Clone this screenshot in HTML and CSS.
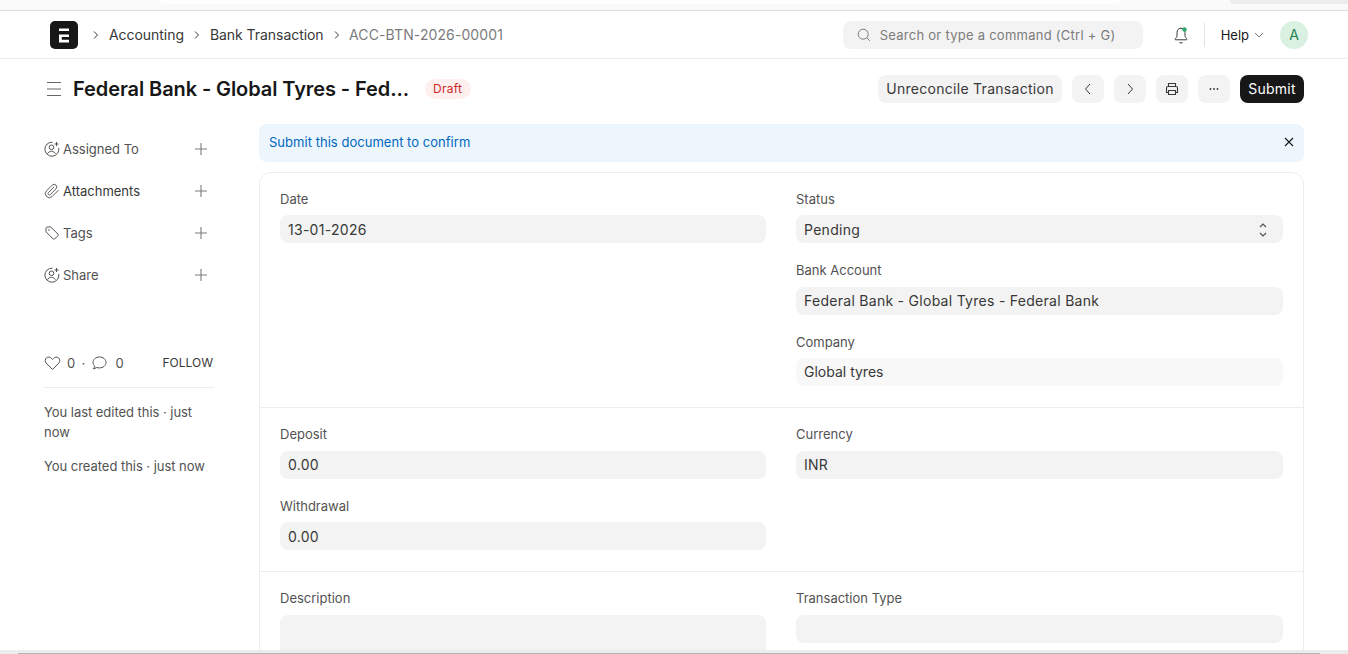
FILE: index.html
```html
<!DOCTYPE html>
<html lang="en">
<head>
<meta charset="utf-8">
<title>ACC-BTN-2026-00001</title>
<link rel="stylesheet" href="styles.css">
</head>
<body>
<div class="app">
  <div class="chrome-top"><span class="tab-white"></span><span class="tab-gray"></span></div>
  <header class="navbar">
    <svg class="logo" width="28" height="28" viewBox="0 0 28 28"><rect width="28" height="28" rx="5" fill="#171717"/><path d="M9 7.500h10v2.600H9zM9 13.500h10v2.600h-7.200v2.600H19v2.800H9z" fill="#fff"/></svg>
    <nav class="crumbs">
      <svg class="crumb-sep" width="8" height="10" viewBox="0 0 8 10"><path d="M2 1.500 5.500 5 2 8.500" fill="none" stroke="#383838" stroke-width="1"/></svg>
      <a class="crumb">Accounting</a>
      <svg class="crumb-sep" width="8" height="10" viewBox="0 0 8 10"><path d="M2 1.500 5.500 5 2 8.500" fill="none" stroke="#383838" stroke-width="1"/></svg>
      <a class="crumb">Bank Transaction</a>
      <svg class="crumb-sep" width="8" height="10" viewBox="0 0 8 10"><path d="M2 1.500 5.500 5 2 8.500" fill="none" stroke="#383838" stroke-width="1"/></svg>
      <a class="crumb crumb-current">ACC-BTN-2026-00001</a>
    </nav>
    <div class="search">
      <svg width="14" height="14" viewBox="0 0 14 14"><circle cx="6.200" cy="6.200" r="5" fill="none" stroke="#7c7c7c" stroke-width="1"/><path d="m9.800 9.800 3 3" stroke="#7c7c7c" stroke-width="1"/></svg>
      <span>Search or type a command (Ctrl + G)</span>
    </div>
    <svg class="bell" width="16" height="18" viewBox="0 0 16 18"><path d="M8 2.200c-2.600 0-4 2-4 4.400v3.200c0 1.200-.9 2-1.800 3-.3.5 0 1 .5 1h10.600c.5 0 .8-.5.5-1-.9-1-1.800-1.800-1.800-3V6.600C12 4.200 10.600 2.200 8 2.200ZM6.300 16c.4.700 1 1 1.700 1s1.300-.3 1.700-1" fill="none" stroke="#383838" stroke-width="1"/><circle cx="11.500" cy="3.500" r="2.200" fill="#30a66d"/></svg>
    <span class="nav-div"></span>
    <span class="help">Help</span>
    <svg class="help-chev" width="10" height="6" viewBox="0 0 10 6"><path d="m1 1 4 4 4-4" fill="none" stroke="#7c7c7c" stroke-width="1"/></svg>
    <span class="avatar">A</span>
  </header>

  <div class="page-head">
    <svg class="menu" width="16" height="14" viewBox="0 0 16 14"><path d="M0 .5h14M0 7h14M0 13.500h14" stroke="#666" stroke-width="1"/></svg>
    <h1 class="title">Federal Bank - Global Tyres - Fed...</h1>
    <span class="pill">Draft</span>
    <div class="actions">
      <button class="btn btn-text">Unreconcile Transaction</button>
      <button class="btn btn-icon"><svg width="16" height="16" viewBox="0 0 16 16"><path d="M10 3 5.500 8l4.500 5" fill="none" stroke="#383838" stroke-width="1"/></svg></button>
      <button class="btn btn-icon"><svg width="16" height="16" viewBox="0 0 16 16"><path d="m6 3 4.500 5L6 13" fill="none" stroke="#383838" stroke-width="1"/></svg></button>
      <button class="btn btn-icon"><svg width="16" height="16" viewBox="0 0 16 16"><path d="M4.500 5.500V2.500h7v3M4.500 11.500H2.500V7a1.500 1.500 0 0 1 1.500-1.500h8A1.500 1.500 0 0 1 13.500 7v4.500h-2M4.500 9.500h7v4h-7z" fill="none" stroke="#383838" stroke-width="1.100"/></svg></button>
      <button class="btn btn-icon"><svg width="16" height="16" viewBox="0 0 16 16"><circle cx="4.500" cy="8" r=".9" fill="#383838"/><circle cx="8" cy="8" r=".9" fill="#383838"/><circle cx="11.500" cy="8" r=".9" fill="#383838"/></svg></button>
      <button class="btn btn-primary">Submit</button>
    </div>
  </div>

  <div class="body">
    <aside class="sidebar">
      <div class="side-item">
        <svg width="16" height="16" viewBox="0 0 16 16"><g fill="none" stroke="#525252"><path d="M8.500 1.200A7 7 0 1 0 14.800 7"/><circle cx="7.500" cy="6.300" r="2.300"/><path d="M3.500 12.700c.8-1.500 2.300-2.400 4-2.400s3.200.9 4 2.400M12.500 1v4M10.500 3h4"/></g></svg>
        <span class="side-label">Assigned To</span>
        <svg class="plus" width="14" height="14" viewBox="0 0 14 14"><path d="M7 1v12M1 7h12" stroke="#7c7c7c" stroke-width="1.100"/></svg>
      </div>
      <div class="side-item">
        <svg width="16" height="16" viewBox="0 0 24 24"><path d="m21.440 11.050-9.190 9.190a6 6 0 0 1-8.490-8.490l8.570-8.570A4 4 0 1 1 18 8.840l-8.590 8.570a2 2 0 0 1-2.830-2.830l8.490-8.480" fill="none" stroke="#525252" stroke-width="1.400" stroke-linecap="round" stroke-linejoin="round"/></svg>
        <span class="side-label side-dark">Attachments</span>
        <svg class="plus" width="14" height="14" viewBox="0 0 14 14"><path d="M7 1v12M1 7h12" stroke="#7c7c7c" stroke-width="1.100"/></svg>
      </div>
      <div class="side-item">
        <svg width="16" height="16" viewBox="0 0 16 16"><path d="M2 3.200C2 2.500 2.500 2 3.200 2h3.600L14 9.200c.4.400.4 1 0 1.400l-3.400 3.400c-.4.400-1 .4-1.400 0L2 6.800Z" fill="none" stroke="#525252"/><circle cx="5" cy="5" r=".8" fill="#525252"/></svg>
        <span class="side-label">Tags</span>
        <svg class="plus" width="14" height="14" viewBox="0 0 14 14"><path d="M7 1v12M1 7h12" stroke="#7c7c7c" stroke-width="1.100"/></svg>
      </div>
      <div class="side-item">
        <svg width="16" height="16" viewBox="0 0 16 16"><g fill="none" stroke="#525252"><path d="M8.500 1.200A7 7 0 1 0 14.800 7"/><circle cx="7.500" cy="6.300" r="2.300"/><path d="M3.500 12.700c.8-1.500 2.300-2.400 4-2.400s3.200.9 4 2.400M12.500 1v4M10.500 3h4"/></g></svg>
        <span class="side-label">Share</span>
        <svg class="plus" width="14" height="14" viewBox="0 0 14 14"><path d="M7 1v12M1 7h12" stroke="#7c7c7c" stroke-width="1.100"/></svg>
      </div>
      <div class="stats">
        <svg width="17" height="16" viewBox="0 0 17 16"><path d="M8.500 14.500 2.300 8.200C.8 6.600.9 4.200 2.400 2.900c1.600-1.300 3.900-1 5.200.6l.9 1 .9-1c1.300-1.600 3.600-1.900 5.200-.6 1.500 1.300 1.600 3.700.1 5.300Z" fill="none" stroke="#525252" stroke-linejoin="round"/></svg>
        <span class="stat-num">0</span>
        <span class="stat-dot">·</span>
        <svg width="16" height="16" viewBox="0 0 16 16"><path d="M8.500 2c-3.600 0-6.500 2.400-6.500 5.400 0 1.500.7 2.800 1.800 3.800L2.500 14l3.300-1.500c.8.300 1.700.4 2.700.4 3.600 0 6.500-2.400 6.500-5.500S12.100 2 8.500 2Z" fill="none" stroke="#525252" stroke-linejoin="round"/></svg>
        <span class="stat-num stat-num-last">0</span>
        <span class="follow">FOLLOW</span>
      </div>
      <p class="meta meta-first">You last edited this · just now</p>
      <p class="meta">You created this · just now</p>
    </aside>

    <main class="main">
      <div class="alert">
        <span>Submit this document to confirm</span>
        <svg width="12" height="12" viewBox="0 0 12 12"><path d="m2 2 8 8M10 2l-8 8" stroke="#171717" stroke-width="1.100"/></svg>
      </div>
      <div class="card">
        <section class="section s1">
          <div class="col">
            <div class="field"><label class="label label-low">Date</label><div class="input input-low">13-01-2026</div></div>
          </div>
          <div class="col">
            <div class="field"><label class="label label-low">Status</label><div class="input input-select">Pending
              <svg width="10" height="14" viewBox="0 0 10 14"><path d="m2 4 3-3 3 3M2 10l3 3 3-3" fill="none" stroke="#525252" stroke-width="1.200"/></svg></div></div>
            <div class="field"><label class="label">Bank Account</label><div class="input">Federal Bank - Global Tyres - Federal Bank</div></div>
            <div class="field"><label class="label label-low">Company</label><div class="input input-light">Global tyres</div></div>
          </div>
        </section>
        <section class="section s2">
          <div class="col">
            <div class="field"><label class="label">Deposit</label><div class="input">0.00</div></div>
            <div class="field"><label class="label label-low">Withdrawal</label><div class="input input-low">0.00</div></div>
          </div>
          <div class="col">
            <div class="field"><label class="label">Currency</label><div class="input">INR</div></div>
          </div>
        </section>
        <section class="section s3">
          <div class="col">
            <div class="field"><label class="label">Description</label><div class="input input-tall"></div></div>
          </div>
          <div class="col">
            <div class="field"><label class="label">Transaction Type</label><div class="input"></div></div>
          </div>
        </section>
      </div>
    </main>
  </div>
  <div class="scrollbar"><span class="thumb"></span></div>
</div>
</body>
</html>
```
FILE: styles.css
```css
* { box-sizing: border-box; }
html, body { margin: 0; height: 100%; overflow: hidden; }
body { font-family: Inter, "Liberation Sans", sans-serif; background: #fff; color: #171717; }
.app { height: 100vh; display: flex; flex-direction: column; overflow: hidden; }

.chrome-top { flex: none; height: 11px; background: #fafafa; border-bottom: 1px solid #dcdcdc; display: flex; align-items: flex-start; }
.tab-white { width: 960px; height: 4px; margin-left: 160px; background: #fff; border-radius: 0 0 6px 6px; }
.tab-gray { flex: 1; height: 4px; margin-left: 110px; background: #ececec; border-radius: 0 0 0 6px; }

.navbar { flex: none; height: 48px; border-bottom: 1px solid #ededed; padding: 0 40px 0 50px; display: flex; align-items: center; }
.logo { flex: none; }
.crumbs { display: flex; align-items: center; margin-left: 14px; font-size: 14px; letter-spacing: -.05px; }
.crumb { color: #383838; }
.crumb-sep { margin-right: 9px; }
.crumb + .crumb-sep { margin-left: 9px; }
.crumb-current { color: #7c7c7c; letter-spacing: .1px; margin-left: -.5px; }
.search { width: 300px; height: 28px; margin-left: auto; border-radius: 8px; background: #f3f3f3; display: flex; align-items: center; gap: 9px; padding-left: 14px; font-size: 13px; letter-spacing: .02em; color: #7c7c7c; }
.bell { margin-left: 30px; }
.nav-div { width: 1px; height: 24px; background: #e2e2e2; margin-left: 15px; }
.help { margin-left: 16px; font-size: 13px; color: #171717; }
.help-chev { margin-left: 5px; }
.avatar { width: 28px; height: 28px; margin-left: 16px; border-radius: 50%; background: #daf0e1; color: #228055; display: flex; align-items: center; justify-content: center; font-size: 14px; }

.page-head { flex: none; height: 65px; padding: 16px 44px 0 47px; display: flex; align-items: flex-start; }
.menu { margin-top: 7px; flex: none; }
.title { margin: 0 0 0 10px; font-size: 20px; line-height: 28px; font-weight: 600; letter-spacing: -.09px; color: #171717; }
.pill { margin: 4px 0 0 16px; height: 20px; padding: 0 8.5px 0 8px; border-radius: 10px; background: #fff0f0; color: #cc2929; font-size: 12px; line-height: 20px; letter-spacing: .02em; }
.actions { margin-left: auto; display: flex; gap: 10px; }
.btn { height: 28px; border: 0; border-radius: 8px; padding: 0; background: #f3f3f3; color: #383838; font-family: inherit; font-size: 14px; letter-spacing: .02em; display: flex; align-items: center; justify-content: center; }
.btn-text { width: 184px; padding-bottom: 2px; }
.btn-icon { width: 32px; }
.btn-primary { width: 64px; background: #171717; color: #fff; padding-bottom: 2px; }

.body { flex: 1; min-height: 0; display: flex; padding: 0 44px; gap: 45px; overflow: hidden; }
.sidebar { flex: none; width: 170px; padding-top: 4px; font-size: 13px; color: #525252; }
.side-item { height: 42px; display: flex; align-items: center; }
.side-label { margin-left: 3px; }
.side-dark { color: #383838; }
.plus { margin-left: auto; margin-right: 6px; }
.stats { margin-top: 59px; height: 33px; border-bottom: 1px solid #ededed; display: flex; align-items: flex-start; letter-spacing: .02em; }
.stat-num { margin-left: 6px; }
.stat-num-last { margin-left: 8px; }
.stat-dot { margin: 0 6px; }
.follow { margin-left: auto; margin-right: 1px; font-size: 12px; color: #383838; letter-spacing: 0; }
.meta { margin: 0; line-height: 20px; letter-spacing: -.04px; }
.meta-first { margin: 14px 0 14px; }

.main { flex: 1; min-width: 0; }
.alert { height: 38px; border-radius: 8px; background: #edf6fd; color: #0068bd; font-size: 13px; letter-spacing: .03px; display: flex; align-items: center; justify-content: space-between; padding: 0 9px 2px 10px; }
.card { margin-top: 10px; border: 1px solid #ededed; border-radius: 12px; }
.section { display: grid; grid-template-columns: 486px 1fr; gap: 30px; padding: 0 20px; }
.section + .section { border-top: 1px solid #ededed; }
.s1 { padding-top: 18.4px; padding-bottom: 20.6px; }
.s2 { padding-top: 19.4px; padding-bottom: 20.6px; }
.s3 { padding-top: 19px; padding-bottom: 20px; }
.col { display: flex; flex-direction: column; gap: 19.5px; min-width: 0; }
.s2 .col { gap: 19px; }
.label { display: block; height: 16px; margin-bottom: 8px; font-size: 13px; line-height: 15px; color: #525252; }
.label-low { line-height: 17px; }
.input { height: 28px; border-radius: 8px; background: #f3f3f3; padding: 0 8px; font-size: 14px; line-height: 28px; color: #383838; letter-spacing: .02em; }
.input-low { line-height: 30px; }
.input-select { display: flex; align-items: center; justify-content: space-between; padding: 2px 15px 0 8px; }
.input-light { background: #f8f8f8; letter-spacing: 0; }
.input-tall { height: 80px; }

.scrollbar { flex: none; height: 4px; background: #ececec; padding: 3px 28px 0 18px; }
.thumb { display: block; height: 1px; background: #b5b5b5; }
```
